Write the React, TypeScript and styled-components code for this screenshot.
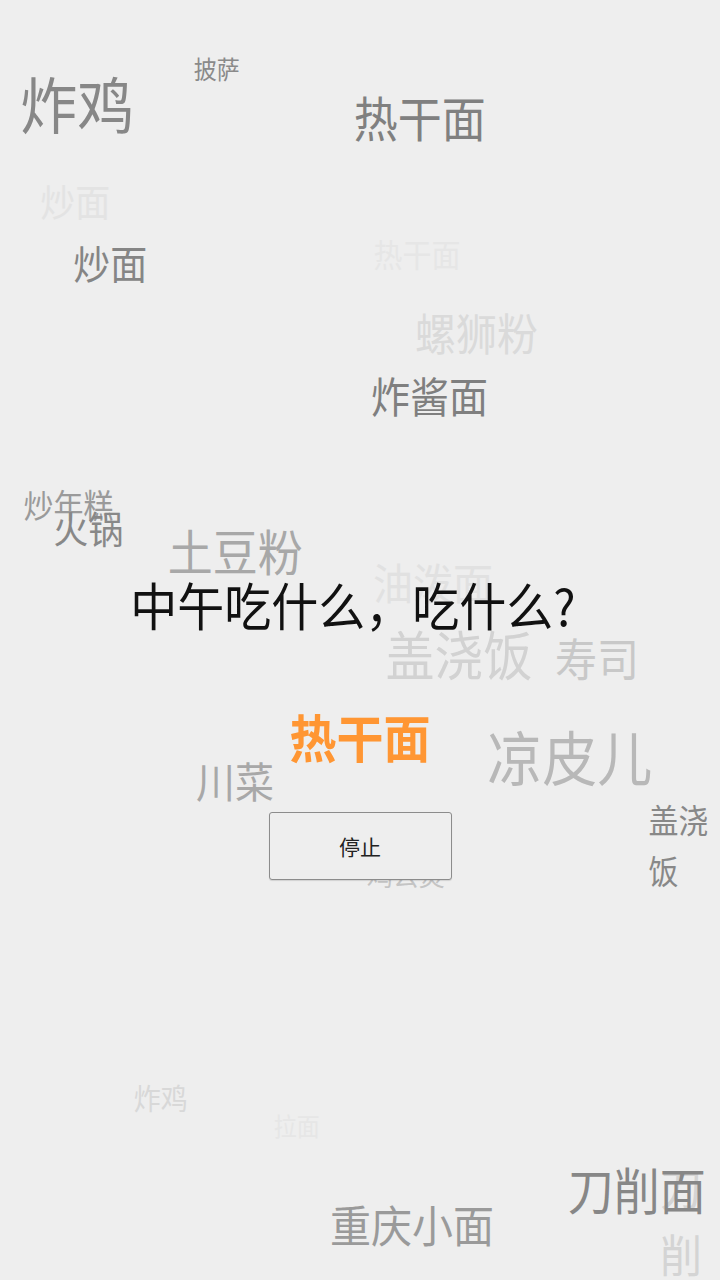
import React from "react";
import styled, { createGlobalStyle } from "styled-components";

const GlobalStyle = createGlobalStyle`
  html, body {
    margin: 0;
    padding: 0;
    background: #eeeeee;
  }
  body {
    font-family: "Noto Sans CJK SC", "Noto Sans", sans-serif;
  }
`;

const Stage = styled.main`
  position: relative;
  width: 720px;
  height: 1280px;
  overflow: hidden;
  background: #eeeeee;
`;

const Cloud = styled.div`
  position: absolute;
  inset: 0;
`;

const Word = styled.span<{ $x: number; $y: number; $size: number; $color: string; $wrap?: number; $lh?: number }>`
  position: absolute;
  left: ${(p) => p.$x - p.$size * 0.05}px;
  top: ${(p) => p.$y - p.$size * 0.08 - (p.$lh ? (p.$lh - p.$size) / 2 : 0)}px;
  font-size: ${(p) => p.$size}px;
  line-height: ${(p) => (p.$lh ? `${p.$lh}px` : "1")};
  color: ${(p) => p.$color};
  white-space: ${(p) => (p.$wrap ? "normal" : "nowrap")};
  width: ${(p) => (p.$wrap ? `${p.$wrap}px` : "auto")};
  transform: scaleY(1.08);
  transform-origin: top left;
`;

const Column = styled.section`
  position: relative;
  display: flex;
  flex-direction: column;
  align-items: center;
  padding-top: 574px;
`;

const Title = styled.h1`
  margin: 0 14px 0 0;
  font-size: 47px;
  font-weight: 400;
  line-height: 1.2;
  color: #111111;
  transform: scaleY(1.08);
  transform-origin: top center;
`;

const Result = styled.div`
  margin-top: 76px;
  font-size: 47px;
  font-weight: 700;
  line-height: 1.2;
  color: #ff9633;
  transform: scaleY(1.08);
  transform-origin: top center;
`;

const StopButton = styled.button`
  margin-top: 49px;
  width: 183px;
  height: 68px;
  background: #eeeeee;
  border: 1px solid #8c8c8c;
  border-radius: 3px;
  box-shadow: 0 1px 1px rgba(0, 0, 0, 0.12);
  font-family: "Noto Sans CJK SC", sans-serif;
  font-size: 21px;
  color: #222222;
  padding: 0;
`;

type W = { t: string; x: number; y: number; s: number; c: string; wrap?: number; lh?: number };

const words: W[] = [
  { t: "炒面", x: 42, y: 183, s: 35, c: "#e3e3e3" },
  { t: "热干面", x: 375, y: 240, s: 29, c: "#e6e6e6" },
  { t: "螺狮粉", x: 417, y: 313, s: 41, c: "#dadada" },
  { t: "油泼面", x: 375, y: 563, s: 40, c: "#e1e1e1" },
  { t: "盖浇饭", x: 388, y: 630, s: 49, c: "#d2d2d2" },
  { t: "寿司", x: 557, y: 638, s: 42, c: "#c8c8c8" },
  { t: "鸡公煲", x: 368, y: 862, s: 26, c: "#c4c4c4" },
  { t: "炸鸡", x: 135, y: 1085, s: 27, c: "#d8d8d8" },
  { t: "拉面", x: 275, y: 1115, s: 23, c: "#e6e6e6" },
  { t: "刀削", x: 662, y: 1166, s: 42, c: "#d4d4d4", wrap: 44, lh: 62 },
  { t: "披萨", x: 195, y: 58, s: 23, c: "#8a8a8a" },
  { t: "炸鸡", x: 23, y: 77, s: 57, c: "#878787" },
  { t: "热干面", x: 356, y: 97, s: 44, c: "#808080" },
  { t: "炒面", x: 75, y: 245, s: 37, c: "#858585" },
  { t: "炸酱面", x: 373, y: 377, s: 39, c: "#7f7f7f" },
  { t: "炒年糕", x: 25, y: 490, s: 30, c: "#9a9a9a" },
  { t: "火锅", x: 55, y: 510, s: 35, c: "#888888" },
  { t: "土豆粉", x: 170, y: 530, s: 45, c: "#a8a8a8" },
  { t: "凉皮儿", x: 490, y: 730, s: 55, c: "#b8b8b8" },
  { t: "川菜", x: 198, y: 762, s: 39, c: "#a8a8a8" },
  { t: "盖浇饭", x: 650, y: 805, s: 30, c: "#888888", wrap: 64, lh: 47 },
  { t: "刀削面", x: 570, y: 1168, s: 46, c: "#878787" },
  { t: "重庆小面", x: 332, y: 1205, s: 41, c: "#9a9a9a" },
];

export default function App() {
  return (
    <>
      <GlobalStyle />
      <Stage>
        <Cloud>
          {words.map((w, i) => (
            <Word key={i} $x={w.x} $y={w.y} $size={w.s} $color={w.c} $wrap={w.wrap} $lh={w.lh}>
              {w.t}
            </Word>
          ))}
        </Cloud>
        <Column>
          <Title>中午吃什么，吃什么?</Title>
          <Result>热干面</Result>
          <StopButton type="button">停止</StopButton>
        </Column>
      </Stage>
    </>
  );
}
